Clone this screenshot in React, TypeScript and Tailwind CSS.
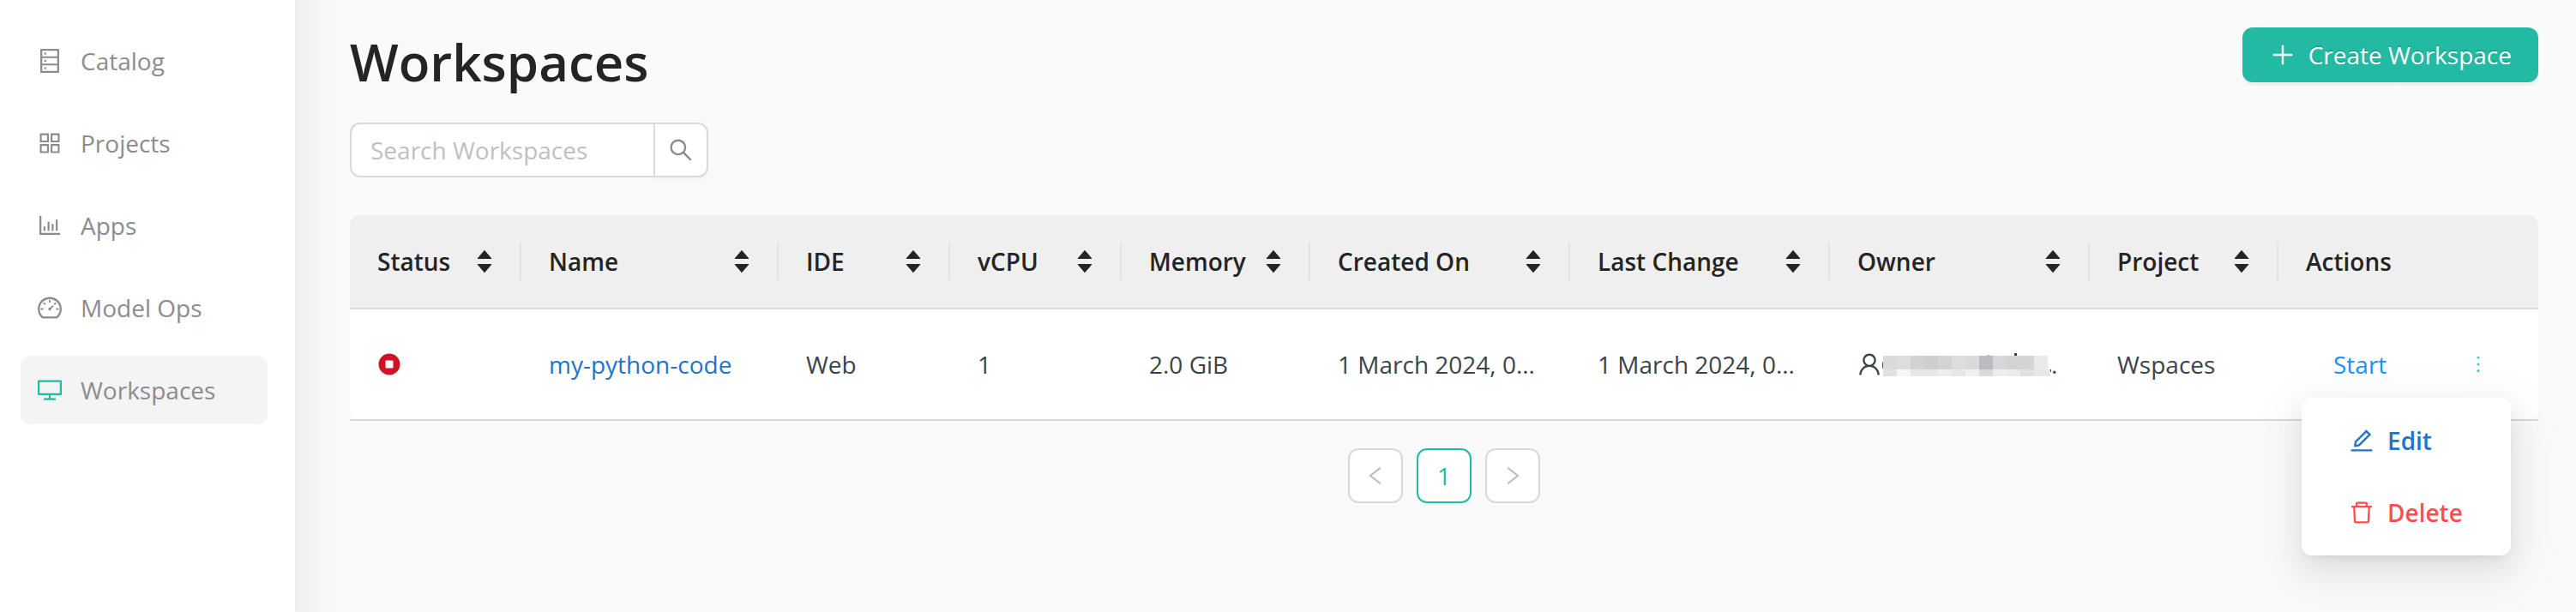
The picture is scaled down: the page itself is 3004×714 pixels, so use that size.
import React from "react";
import {
  AiFillCaretDown,
  AiFillCaretUp,
  AiOutlineAppstore,
  AiOutlineBarChart,
  AiOutlineDashboard,
  AiOutlineDatabase,
  AiOutlineDelete,
  AiOutlineDesktop,
  AiOutlineEdit,
  AiOutlineLeft,
  AiOutlineMore,
  AiOutlinePlus,
  AiOutlineRight,
  AiOutlineSearch,
  AiOutlineUser,
} from "react-icons/ai";
import clsx from "clsx";

const navItems = [
  { label: "Catalog", icon: AiOutlineDatabase },
  { label: "Projects", icon: AiOutlineAppstore },
  { label: "Apps", icon: AiOutlineBarChart },
  { label: "Model Ops", icon: AiOutlineDashboard },
  { label: "Workspaces", icon: AiOutlineDesktop, active: true },
];

const columns = [
  { title: "Status", width: "w-[200px]" },
  { title: "Name", width: "w-[300px]" },
  { title: "IDE", width: "w-[200px]" },
  { title: "vCPU", width: "w-[200px]" },
  { title: "Memory", width: "w-[220px]" },
  { title: "Created On", width: "" },
  { title: "Last Change", width: "" },
  { title: "Owner", width: "" },
  { title: "Project", width: "w-[220px]" },
];

// two rows of blocks that hide the owner's name
const maskTop = ["#d9dbdb", "#dcdedd", "#d1d2d4", "#cdcfcf", "#d2d3d5", "#dcdedd", "#d9dbda", "#bbbcbf", "#d6d7d9", "#d2d3d5", "#d3d4d5", "#e9eae9"];
const maskBottom = ["#e1e1e1", "#f6f6f6", "#e5e7e6", "#e8e8e8", "#eceeed", "#e5e7e6", "#f1f1f1", "#d9dadd", "#ededed", "#ececec", "#dfe1e0", "#e8e8e8"];

function Sidebar() {
  return (
    <nav className="w-[344px] shrink-0 bg-white pt-[31px] pr-8 pl-6">
      <ul className="flex flex-col gap-4">
        {navItems.map((item) => (
          <li key={item.label}>
            <a
              href="#"
              className={clsx(
                "flex h-20 items-center gap-5 rounded-xl px-[18px] text-[#8c8c8c]",
                item.active && "bg-[#f4f4f4]"
              )}
            >
              <item.icon
                className={clsx("h-8 w-8", item.active && "text-[#23baa4]")}
              />
              {item.label}
            </a>
          </li>
        ))}
      </ul>
    </nav>
  );
}

function SearchBox() {
  return (
    <form className="mt-[31px] flex h-16 w-[418px]">
      <input
        type="text"
        aria-label="Search Workspaces"
        placeholder="Search Workspaces"
        className="min-w-0 flex-1 rounded-l-xl border-2 border-r-0 border-[#d9d9d9] bg-white px-[22px] placeholder:text-[#bfbfbf]"
      />
      <button
        type="button"
        aria-label="Search"
        className="flex w-16 items-center justify-center rounded-r-xl border-2 border-[#d9d9d9] bg-white text-[#8c8c8c] shadow-[0_4px_0_rgba(0,0,0,0.016)]"
      >
        <AiOutlineSearch className="h-8 w-8" />
      </button>
    </form>
  );
}

function StoppedIcon() {
  return (
    <svg viewBox="0 0 28 28" className="h-7 w-7" role="img" aria-label="Stopped">
      <circle cx="14" cy="14" r="12.5" fill="#cf1322" />
      <rect x="9.5" y="9.5" width="9" height="9" rx="1" fill="#fff" />
    </svg>
  );
}

function OwnerMask() {
  return (
    <svg viewBox="0 0 196 24" className="mt-1 h-6 w-[196px] shrink-0 overflow-visible" aria-hidden="true">
      <path d="M0 7Q-1.5 11 0 15" fill="none" stroke="#3b444b" strokeWidth="1" />
      <path d="M118 1Q123-2 128 1Z" fill="#3b444b" />
      <rect x="153" y="-3" width="3" height="3" fill="#3b444b" />
      {maskTop.map((fill, i) => (
        <rect key={i} x={i * 16} y="0" width="16" height="16" fill={fill} />
      ))}
      {maskBottom.map((fill, i) => (
        <rect key={i} x={i * 16} y="16" width={i === 11 ? 19 : 16} height="8" fill={fill} />
      ))}
      <rect x="195" y="16" width="1" height="3" fill="#3b444b" />
    </svg>
  );
}

function RowMenu() {
  return (
    <div className="absolute top-[61px] right-0 w-[244px] rounded-xl bg-white py-2 font-semibold shadow-[0_6px_12px_-8px_rgba(0,0,0,0.12),0_12px_32px_0_rgba(0,0,0,0.08),0_18px_56px_16px_rgba(0,0,0,0.05)]">
      <button type="button" className="flex h-[84px] w-full items-center gap-[14px] pl-[54px] text-[#2173cc]">
        <AiOutlineEdit className="h-8 w-8" />
        Edit
      </button>
      <button type="button" className="flex h-[84px] w-full items-center gap-[14px] pl-[54px] text-[#ff4d4f]">
        <AiOutlineDelete className="h-8 w-8" />
        Delete
      </button>
    </div>
  );
}

function WorkspaceTable() {
  return (
    <div className="mt-11 border-b-2 border-[#d9d9d9]">
      <table className="w-full table-fixed border-separate border-spacing-0 text-left">
        <thead>
          <tr>
            {columns.map((col) => (
              <th
                key={col.title}
                scope="col"
                className={clsx(
                  "border-b-2 border-[#d9d9d9] bg-[#efefef] py-8 font-semibold text-[#242424] first:rounded-tl-xl",
                  col.width
                )}
              >
                <div className="flex h-11 items-center justify-between border-r-2 border-[#e2e2e2] pr-[29px] pl-8">
                  {col.title}
                  <button type="button" aria-label={`Sort by ${col.title}`} className="flex flex-col">
                    <AiFillCaretUp className="h-6 w-6" />
                    <AiFillCaretDown className="-mt-2 h-6 w-6" />
                  </button>
                </div>
              </th>
            ))}
            <th
              scope="col"
              className="rounded-tr-xl border-b-2 border-[#d9d9d9] bg-[#efefef] px-8 font-semibold text-[#242424]"
            >
              Actions
            </th>
          </tr>
        </thead>
        <tbody>
          <tr className="h-32 [&>td]:bg-white [&>td]:px-8 [&>td:first-child]:rounded-bl-xl [&>td:last-child]:rounded-br-xl">
            <td>
              <StoppedIcon />
            </td>
            <td>
              <a href="#" className="text-[#2173cc]">
                my-python-code
              </a>
            </td>
            <td>Web</td>
            <td>1</td>
            <td>2.0 GiB</td>
            <td className="whitespace-nowrap">1 March 2024, 0...</td>
            <td className="whitespace-nowrap">1 March 2024, 0...</td>
            <td>
              <div className="-ml-0.5 flex items-center">
                <AiOutlineUser className="h-8 w-8 shrink-0" />
                <OwnerMask />
                <span>.</span>
              </div>
            </td>
            <td>Wspaces</td>
            <td>
              <div className="relative flex h-11 items-center justify-between pr-6 pl-8">
                <button type="button" className="text-[#1890ff]">
                  Start
                </button>
                <button type="button" aria-label="More actions" className="text-[#4dc8b6]">
                  <AiOutlineMore className="h-7 w-7" />
                </button>
                <RowMenu />
              </div>
            </td>
          </tr>
        </tbody>
      </table>
    </div>
  );
}

function Pagination() {
  return (
    <div className="mt-8 flex justify-center gap-4">
      <button
        type="button"
        aria-label="Previous page"
        className="flex h-16 w-16 items-center justify-center rounded-xl border-2 border-[#d9d9d9] bg-white text-[#bfbfbf]"
      >
        <AiOutlineLeft className="h-7 w-7" />
      </button>
      <button
        type="button"
        className="flex h-16 w-16 items-center justify-center rounded-xl border-2 border-[#23baa4] bg-white text-[#23baa4]"
      >
        1
      </button>
      <button
        type="button"
        aria-label="Next page"
        className="flex h-16 w-16 items-center justify-center rounded-xl border-2 border-[#d9d9d9] bg-white text-[#bfbfbf]"
      >
        <AiOutlineRight className="h-7 w-7" />
      </button>
    </div>
  );
}

export default function App() {
  return (
    <div className="flex min-h-screen bg-[#fafafa] font-['Open_Sans',sans-serif] text-[28px] leading-[44px] text-[#3b444b]">
      <Sidebar />
      <main className="min-w-0 flex-1 bg-linear-to-r from-[#f0f0f0] via-[#f7f7f7] via-[34px] to-[#fafafa] to-[66px] pt-8 pr-11 pl-16">
        <div className="flex items-start justify-between">
          <h1 className="text-[60px] leading-[80px] font-semibold text-[#242424]">
            Workspaces
          </h1>
          <button
            type="button"
            className="flex h-16 items-center gap-[14px] rounded-xl bg-[#23baa4] px-[31px] text-white shadow-[0_4px_0_rgba(0,0,0,0.045)] text-shadow-[0_-2px_0_rgba(0,0,0,0.12)]"
          >
            <AiOutlinePlus className="h-8 w-8" />
            Create Workspace
          </button>
        </div>
        <SearchBox />
        <WorkspaceTable />
        <Pagination />
      </main>
    </div>
  );
}
